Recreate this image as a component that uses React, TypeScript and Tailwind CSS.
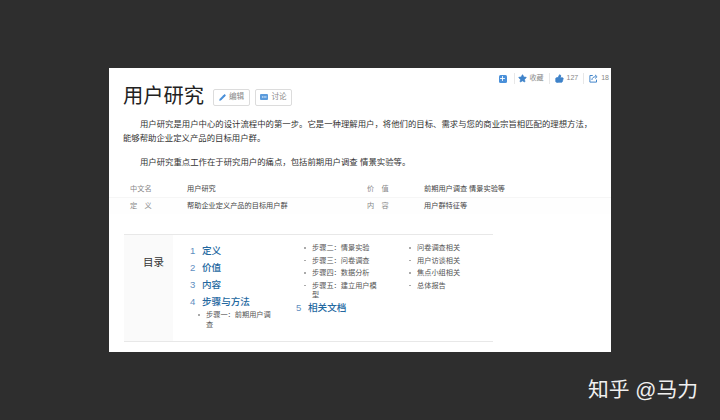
import { Pencil, Star, ThumbsUp, Plus, MoreHorizontal } from "lucide-react";

const CJK = { fontFamily: '"Liberation Sans","Noto Sans CJK SC",sans-serif' };

function Sub({ text, className = "" }: { text: string; className?: string }) {
  return (
    <div className={`relative pl-[8px] text-[7.2px] leading-[9.6px] text-[#555] mb-[3px] ${className}`}>
      <span className="absolute left-0 top-[4px] w-[1.5px] h-[1.5px] bg-[#aaa]" />
      {text}
    </div>
  );
}

function Head({ n, text }: { n: string; text: string }) {
  return (
    <div className="flex items-center h-[17px] text-[9.6px] font-medium text-[#23689f]">
      <span className="w-[12px] text-[#5f8fbf] font-normal">{n}</span>
      <span>{text}</span>
    </div>
  );
}

function Row({ a, b, c, d, line }: { a: string; b: string; c: string; d: string; line?: boolean }) {
  return (
    <div className={`flex h-[16px] items-center text-[7.2px] pl-[21px] ${line ? "border-b border-[#f6f6f6]" : "bg-[#fefefe]"}`}>
      <span className="w-[57px] text-[#888]">{a}</span>
      <span className="w-[180px] text-[#444]">{b}</span>
      <span className="w-[57px] text-[#888]">{c}</span>
      <span className="text-[#444]">{d}</span>
    </div>
  );
}

export default function App() {
  return (
    <div className="relative w-[720px] h-[420px] bg-[#2e2e2e] overflow-hidden pt-[68px] pl-[109px]" style={CJK}>
      <div className="w-[502px] h-[284px] bg-white overflow-hidden">
        <div className="flex justify-end items-center h-[19px] pt-[2px] pr-[2px] text-[7px] text-[#888] whitespace-nowrap">
          <span className="w-[8px] h-[8px] rounded-[1.5px] bg-[#4a90d9] flex items-center justify-center mr-[7px]">
            <Plus size={7} color="#fff" strokeWidth={3} />
          </span>
          <span className="border-l border-[#e8e8e8] h-[11px] mr-[3px]" />
          <Star size={9} fill="#3f83c9" color="#3f83c9" className="mr-[3px]" />
          <span className="mr-[5px]">收藏</span>
          <span className="border-l border-[#e8e8e8] h-[11px] mr-[5px]" />
          <ThumbsUp size={9} fill="#3f83c9" color="#3f83c9" className="mr-[3px]" />
          <span className="mr-[5px]">127</span>
          <span className="border-l border-[#e8e8e8] h-[11px] mr-[5px]" />
          <svg width="9" height="9" viewBox="0 0 12 12" fill="none" stroke="#3f83c9" strokeWidth="1.3" className="mr-[3px]">
            <path d="M5 2H1.2v8.8h8.8V7.5" />
            <path d="M3.8 8C4.2 5 6 3.6 9 3.6" />
            <path d="M8 1.2 10.8 3.6 8 6" />
          </svg>
          <span>18</span>
        </div>

        <div className="flex items-center h-[24px] pl-[14px] mt-[-3px]">
          <h1 className="text-[20.3px] leading-[24px] font-normal text-[#222] w-[90px] whitespace-nowrap">用户研究</h1>
          <span className="flex items-center justify-center w-[37px] h-[17px] border border-[#dcdcdc] rounded-[2px] text-[7.6px] text-[#888] gap-[3px] mt-[2px]">
            <Pencil size={7} fill="#4a90d9" color="#4a90d9" />编辑
          </span>
          <span className="flex items-center justify-center w-[37px] h-[17px] border border-[#dcdcdc] rounded-[2px] text-[7.6px] text-[#888] gap-[3px] mt-[2px] ml-[5px]">
            <span className="w-[8px] h-[6px] rounded-[1px] bg-[#5b9bdc] flex items-center justify-center">
              <MoreHorizontal size={6} color="#fff" />
            </span>
            讨论
          </span>
        </div>

        <div className="pl-[14px] pr-[14px] mt-[9px] text-[8.4px] leading-[14px] text-[#333]">
          <p className="indent-[17px]">用户研究是用户中心的设计流程中的第一步。它是一种理解用户，将他们的目标、需求与您的商业宗旨相匹配的理想方法，能够帮助企业定义产品的目标用户群。</p>
          <p className="indent-[17px] mt-[10px]">用户研究重点工作在于研究用户的痛点，包括前期用户调查 情景实验等。</p>
        </div>

        <div className="mt-[13px]">
          <Row line a="中文名" b="用户研究" c="价　值" d="前期用户调查 情景实验等" />
          <Row a="定　义" b="帮助企业定义产品的目标用户群" c="内　容" d="用户群特征等" />
        </div>

        <div className="flex ml-[15px] w-[369px] h-[108px] mt-[20px] border-y border-[#e8e8e8]">
          <div className="w-[49px] bg-[#fafafa] pt-[20px] pl-[19px] text-[10.5px] leading-[14px] text-[#333] shrink-0">目录</div>
          <div className="flex pl-[17px] pt-[8px]">
            <div className="w-[93px] shrink-0 pr-[8px]">
              <Head n="1" text="定义" />
              <Head n="2" text="价值" />
              <Head n="3" text="内容" />
              <Head n="4" text="步骤与方法" />
              <Sub className="ml-[8px] mt-[-1px]" text="步骤一：前期用户调查" />
            </div>
            <div className="w-[126px] shrink-0 pl-[21px] pr-[30px]">
              <Sub text="步骤二：情景实验" />
              <Sub text="步骤三：问卷调查" />
              <Sub text="步骤四：数据分析" />
              <Sub text="步骤五：建立用户模型" />
              <div className="-ml-[8px] mt-[-3px]"><Head n="5" text="相关文档" /></div>
            </div>
            <div>
              <Sub text="问卷调查相关" />
              <Sub text="用户访谈相关" />
              <Sub text="焦点小组相关" />
              <Sub text="总体报告" />
            </div>
          </div>
        </div>
      </div>
      <div className="absolute left-[588px] top-[376px] text-[20.8px] leading-[28px] text-[#f0f0f0] whitespace-nowrap">知乎 @马力</div>
    </div>
  );
}
